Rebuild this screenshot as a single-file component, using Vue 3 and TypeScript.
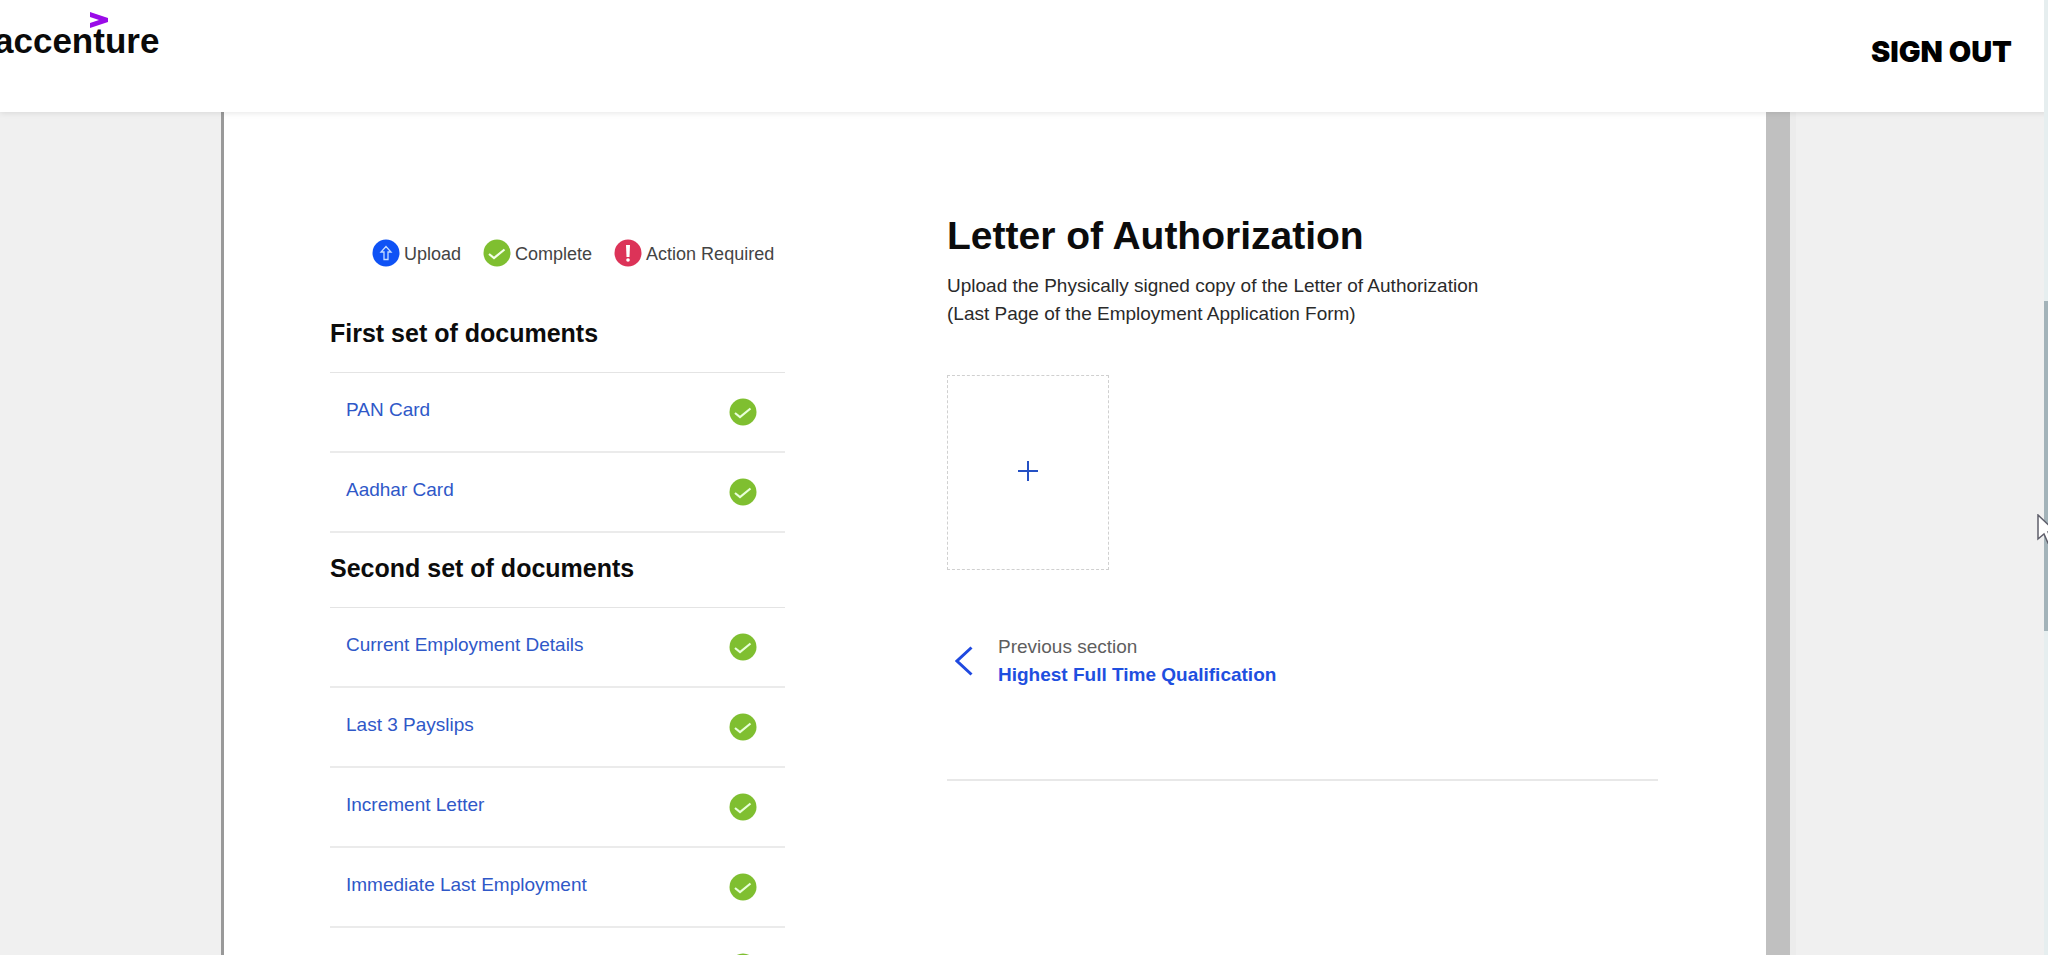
<script setup lang="ts">
interface Group {
  title: string
  items: string[]
}

const groups: Group[] = [
  { title: 'First set of documents', items: ['PAN Card', 'Aadhar Card'] },
  {
    title: 'Second set of documents',
    items: [
      'Current Employment Details',
      'Last 3 Payslips',
      'Increment Letter',
      'Immediate Last Employment',
      '',
    ],
  },
]
</script>

<template>
  <div class="page">
    <header class="header">
      <a class="logo" href="#">
        <svg class="mark" viewBox="0 0 18 16" aria-hidden="true">
          <path d="M0 0 L18 6 V10 L0 16 V11 L9 8 L0 5 Z" fill="#9a0be8" />
        </svg>
        <span>accenture</span>
      </a>
      <button class="signout" type="button">SIGN OUT</button>
    </header>

    <div class="body">
      <main class="sheet">
        <section class="documents">
          <ul class="legend">
            <li>
              <svg class="icon" viewBox="0 0 28 28" aria-hidden="true">
                <circle cx="14" cy="14" r="13.5" fill="#0f52f5" />
                <path d="M14 7.5 L9 13 H12 V20.5 H16 V13 H19 Z" fill="none" stroke="#c4dcff" stroke-width="1.3" />
              </svg>
              <span>Upload</span>
            </li>
            <li>
              <svg class="icon" viewBox="0 0 28 28" aria-hidden="true">
                <circle cx="14" cy="14" r="13.5" fill="#7fbf30" />
                <path d="M6 15 L11 19 L21.5 10.5" fill="none" stroke="#f4ffe8" stroke-width="2.2" />
              </svg>
              <span>Complete</span>
            </li>
            <li>
              <svg class="icon" viewBox="0 0 28 28" aria-hidden="true">
                <circle cx="14" cy="14" r="13.5" fill="#dc3358" />
                <path d="M12 6 H16 L15.5 18 H12.5 Z" fill="#fff" />
                <circle cx="14" cy="21" r="1.8" fill="#fff" />
              </svg>
              <span>Action Required</span>
            </li>
          </ul>

          <div v-for="group in groups" :key="group.title" class="group">
            <h2>{{ group.title }}</h2>
            <ul class="rows">
              <li v-for="item in group.items" :key="item">
                <a href="#">{{ item }}</a>
                <svg class="icon" viewBox="0 0 28 28" aria-hidden="true">
                  <circle cx="14" cy="14" r="13.5" fill="#7fbf30" />
                  <path d="M6 15 L11 19 L21.5 10.5" fill="none" stroke="#e8ffd8" stroke-width="2.2" />
                </svg>
              </li>
            </ul>
          </div>
        </section>

        <section class="detail">
          <h1>Letter of Authorization</h1>
          <p>
            Upload the Physically signed copy of the Letter of Authorization<br />
            (Last Page of the Employment Application Form)
          </p>
          <button class="drop" type="button" aria-label="Add file">
            <svg viewBox="0 0 20 20" aria-hidden="true">
              <path d="M10 0 V20 M0 10 H20" stroke="#2450c4" stroke-width="2" />
            </svg>
          </button>
          <a class="previous" href="#">
            <svg viewBox="0 0 18 30" aria-hidden="true">
              <path d="M16.5 1.5 L2 15 L16.5 28.5" fill="none" stroke="#1f49e0" stroke-width="3" />
            </svg>
            <span class="labels">
              <span>Previous section</span>
              <strong>Highest Full Time Qualification</strong>
            </span>
          </a>
          <hr />
        </section>
      </main>
      <div class="track"></div>
    </div>

    <div class="scrollbar"><div class="thumb"></div></div>
    <svg class="cursor" viewBox="0 0 20 30" aria-hidden="true">
      <path d="M1 1 V25 L7 20 L11 29 L15 27 L11 18 H19 Z" fill="#fff" stroke="#5f5f6b" stroke-width="1.5" />
    </svg>
  </div>
</template>

<style>
html,
body {
  margin: 0;
  overflow: hidden;
}
</style>

<style scoped>
* {
  box-sizing: border-box;
}

.page {
  position: relative;
  display: flex;
  flex-direction: column;
  height: 100vh;
  overflow: hidden;
  background: #f0f0f0;
  color: #0c0c0c;
  font-family: "Liberation Sans", Arial, sans-serif;
  font-size: 19px;
}

ul,
h1,
h2,
p {
  margin: 0;
  padding: 0;
  list-style: none;
}

a {
  text-decoration: none;
}

button {
  padding: 0;
  border: 0;
  background: none;
  font: inherit;
  color: inherit;
}

.header {
  position: relative;
  z-index: 1;
  display: flex;
  flex: none;
  justify-content: space-between;
  align-items: flex-start;
  height: 112px;
  padding: 12px 36px 0 0;
  background: #fff;
  box-shadow: 0 1px 6px rgba(0, 0, 0, 0.1);
}

.logo {
  display: flex;
  flex-direction: column;
  margin-left: -6px;
  color: #0a0a0a;
  font-size: 35px;
  font-weight: 700;
  line-height: 38px;
}

.mark {
  width: 18px;
  height: 16px;
  margin: 0 0 -6px 96px;
}

.signout {
  margin-top: 24px;
  font-family: Inter, "Liberation Sans", sans-serif;
  font-size: 29px;
  font-weight: 900;
  line-height: 32px;
  color: #000;
}

.body {
  display: flex;
  flex: 1;
  min-height: 0;
  padding: 0 258px 0 221px;
}

.sheet {
  display: grid;
  flex: 1;
  grid-template-columns: 455px 1fr;
  column-gap: 162px;
  padding: 0 108px 0 106px;
  border-left: 3px solid #999;
  background: #fff;
  overflow: hidden;
}

.track {
  flex: none;
  width: 24px;
  background: #c0c0c0;
  box-shadow: 6px 0 0 #ececec;
}

.icon {
  flex: none;
  width: 28px;
  height: 28px;
}

.documents {
  padding-top: 126px;
}

.legend {
  display: flex;
  gap: 22px;
  padding-left: 42px;
  color: #444;
  font-size: 18px;
  line-height: 28px;
}

.legend li {
  display: flex;
  align-items: center;
  gap: 4px;
}

.legend span {
  padding-top: 2px;
}

.legend + .group {
  margin-top: 30px;
}

.group h2 {
  height: 74px;
  padding-top: 19px;
  font-size: 25px;
  line-height: 32px;
}

.rows {
  border-top: 1px solid #e4e4e4;
}

.rows li {
  display: flex;
  align-items: center;
  justify-content: space-between;
  height: 80px;
  padding: 0 28px 0 16px;
  border-bottom: 2px solid #ebebeb;
}

.rows a {
  padding-bottom: 5px;
  color: #2f58c8;
}

.detail {
  padding-top: 99px;
}

.detail h1 {
  font-size: 39px;
  line-height: 50px;
}

.detail p {
  margin-top: 11px;
  color: #2a2a2a;
  line-height: 28px;
}

.drop {
  display: flex;
  align-items: center;
  justify-content: center;
  width: 162px;
  height: 195px;
  margin-top: 47px;
  padding-bottom: 4px;
  border: 1px dashed #d0d0d0;
}

.drop svg {
  width: 20px;
  height: 20px;
}

.previous {
  display: inline-flex;
  align-items: center;
  gap: 25px;
  margin-top: 63px;
  padding-left: 8px;
}

.previous svg {
  width: 18px;
  height: 30px;
}

.labels {
  display: flex;
  flex-direction: column;
  color: #5e5e5e;
  line-height: 28px;
}

.labels strong {
  color: #1f4fe0;
}

.detail hr {
  height: 2px;
  margin: 90px 0 0;
  border: 0;
  background: #e8e8e8;
}

.scrollbar {
  position: absolute;
  z-index: 2;
  top: 0;
  right: 0;
  bottom: 0;
  width: 4px;
  background: #e6eeef;
}

.thumb {
  height: 330px;
  margin-top: 301px;
  background: #a3b3b9;
}

.cursor {
  position: absolute;
  z-index: 3;
  top: 514px;
  right: -9px;
  width: 20px;
  height: 30px;
}
</style>
